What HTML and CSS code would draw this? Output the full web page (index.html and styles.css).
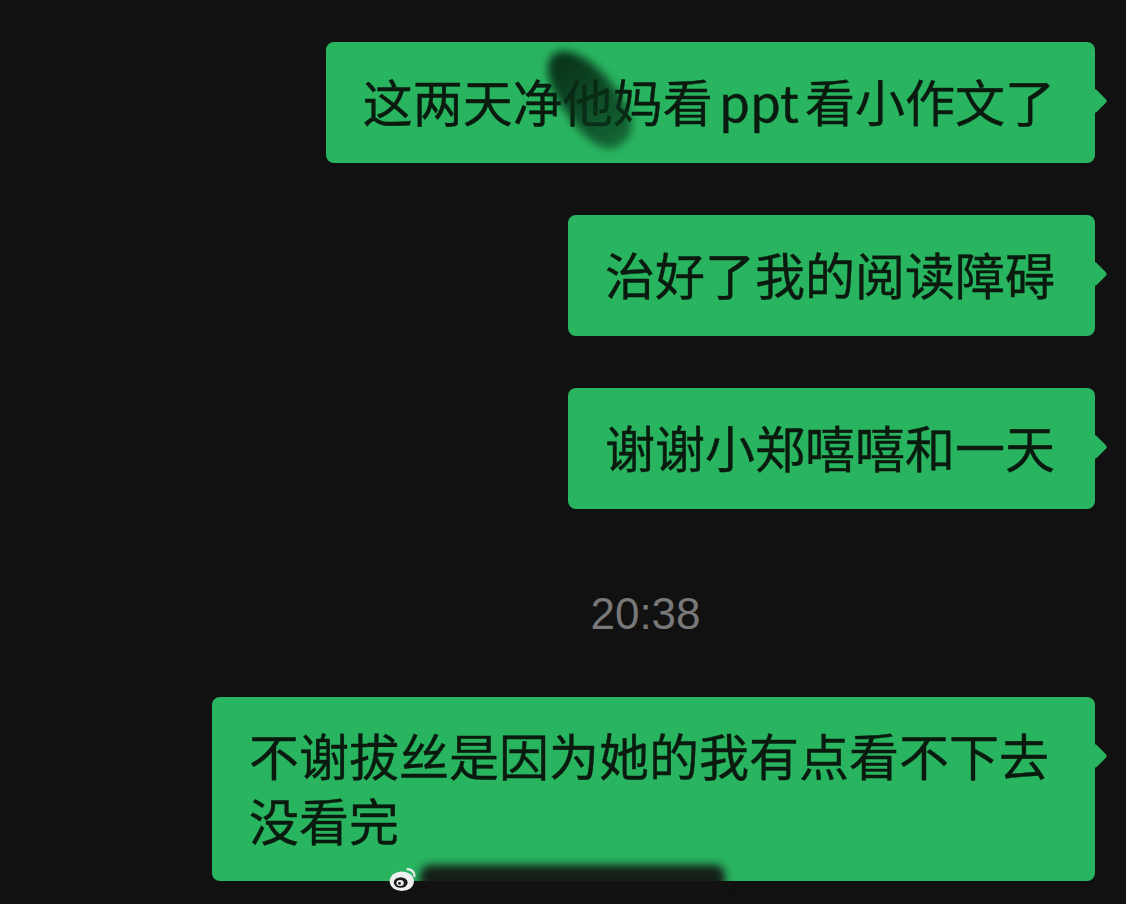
FILE: index.html
```html
<!DOCTYPE html>
<html lang="zh-CN">
<head>
  <meta charset="UTF-8">
  <meta name="viewport" content="width=device-width, initial-scale=1.0">
  <title>聊天记录</title>
  <link rel="stylesheet" href="styles.css">
</head>
<body>

  <div class="chat">
    <div class="msg first">
      <div class="bubble tight">
        这两天净他妈看 ppt 看小作文了
        <span class="smudge"></span>
      </div>
    </div>

    <div class="msg">
      <div class="bubble">治好了我的阅读障碍</div>
    </div>

    <div class="msg">
      <div class="bubble">谢谢小郑嘻嘻和一天</div>
    </div>

    <div class="time">20:38</div>

    <div class="msg">
      <div class="bubble two">
        不谢拔丝是因为她的我有点看不下去没看完
        <div class="watermark">
          <svg class="wb-logo" width="30" height="30" viewBox="0 0 26 26">
            <ellipse cx="12" cy="15" rx="10.5" ry="8.5" fill="#f0f0f0"/>
            <ellipse cx="11" cy="16" rx="6" ry="4.5" fill="#1a1a1a"/>
            <ellipse cx="10.5" cy="16.5" rx="3.2" ry="2.6" fill="#f0f0f0"/>
            <circle cx="10" cy="16.8" r="1.2" fill="#1a1a1a"/>
            <path d="M17 4.5 q5.5 0.5 6 6" stroke="#f0f0f0" stroke-width="2" fill="none" stroke-linecap="round"/>
          </svg>
          <span class="wb-blur"></span>
        </div>
      </div>
    </div>
  </div>

</body>
</html>
```

FILE: styles.css
```css
body {
  margin: 0;
  background: #111111;
  font-family: "Noto Sans CJK SC", "Noto Sans", sans-serif;
  min-height: 100vh;
  overflow: hidden;
}

.chat {
  display: flex;
  flex-direction: column;
  align-items: flex-end;
  padding: 42px 31px 0 0;
}

.msg {
  display: flex;
  justify-content: flex-end;
  margin-top: 52px;
}

.msg.first {
  margin-top: 0;
}

.bubble {
  position: relative;
  max-width: 806px;
  background: #29b460;
  color: #0a1a0e;
  font-size: 50px;
  line-height: 65px;
  padding: 26px 40px 30px 37px;
  border-radius: 8px;
  -webkit-text-stroke: 0.4px #0a1a0e;
}

.bubble.tight {
  word-spacing: -5px;
}

.bubble.two {
  padding: 25px 40px 29px 37px;
}

.bubble::after {
  content: "";
  position: absolute;
  right: -9px;
  top: 50px;
  width: 18px;
  height: 18px;
  background: #29b460;
  border-radius: 3px;
  transform: rotate(45deg);
}

.smudge {
  position: absolute;
  left: 236px;
  top: 0;
  width: 54px;
  height: 112px;
  background: linear-gradient(to bottom, rgba(6, 40, 20, 0.95), rgba(10, 60, 30, 0.65));
  border-radius: 45% 55% 40% 40%;
  transform: rotate(-36deg);
  filter: blur(4px);
}

.time {
  align-self: stretch;
  text-align: center;
  padding-left: 196px;
  margin-top: 80px;
  margin-bottom: 6px;
  color: #787878;
  font-family: "Liberation Sans", Arial, sans-serif;
  font-size: 44px;
  line-height: 50px;
}

.watermark {
  position: absolute;
  left: 176px;
  bottom: -13px;
  display: flex;
  align-items: center;
  gap: 2px;
}

.wb-blur {
  display: block;
  width: 305px;
  height: 28px;
  background: rgba(18, 18, 18, 0.92);
  border-radius: 10px;
  filter: blur(4px);
}
```
